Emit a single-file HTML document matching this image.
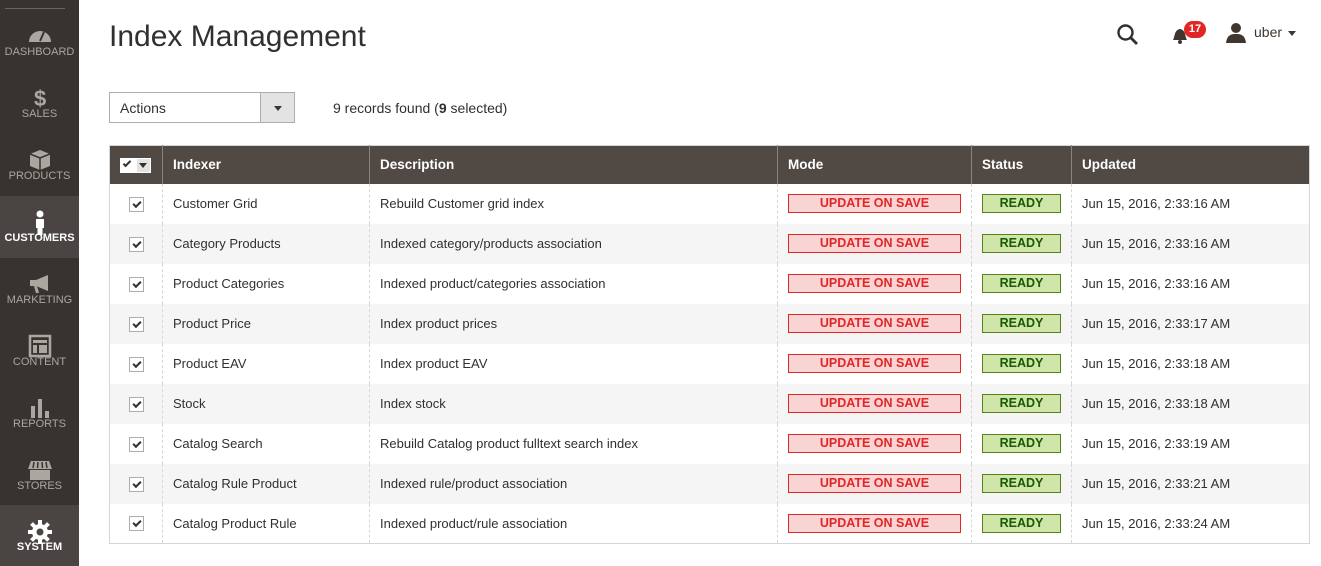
<!DOCTYPE html>
<html><head><meta charset="utf-8"><style>
*{box-sizing:border-box;margin:0;padding:0}
body{width:1321px;height:566px;overflow:hidden;background:#fff;font-family:"Liberation Sans",sans-serif;color:#303030;position:relative}
.side{position:absolute;left:0;top:0;width:79px;height:566px;background:#373330}
.side .line{position:absolute;left:5px;top:8px;width:60px;border-top:1px solid #6b6560}
.item{position:absolute;left:0;width:79px;height:62px;text-align:center;color:#aaa6a0;font-size:11px}
.item.act{background:#4a4542;color:#fff;font-weight:bold}
.item svg{position:absolute;left:27px;top:14px}
.item span{position:absolute;left:0;right:0;top:36px}
h1{position:absolute;left:109px;top:20px;font-size:30px;font-weight:normal;color:#303030}
.sel{position:absolute;left:109px;top:92px;width:186px;height:31px;border:1px solid #adadad}
.sel span{position:absolute;left:10px;top:7px;font-size:14px}
.sel .btn{position:absolute;right:0;top:0;width:34px;height:29px;background:#e3e3e3;border-left:1px solid #adadad}
.sel .btn:after{content:"";position:absolute;left:13px;top:13px;border:4px solid transparent;border-top:5px solid #41362f}
.rec{position:absolute;left:333px;top:100px;font-size:14px}
table{position:absolute;left:109px;top:145px;width:1201px;border-collapse:collapse;font-size:13px;border:1px solid #d6d6d6}
th{background:#514943;color:#fff;text-align:left;height:38px;padding-left:10px;font-size:13.5px;border-left:1px solid #8a837f}
th:first-child{border-left:none}
td{height:40px;padding-left:10px;border-left:1px dashed #d6d6d6}
td:first-child{border-left:none}
tr:nth-child(odd) td{background:#f5f5f5}
.cb{display:inline-block;width:15px;height:15px;border:1px solid #adadad;background:#fff;position:relative;margin-left:9px;vertical-align:middle}
.cb:after{content:"";position:absolute;left:3px;top:3px;width:6px;height:3px;border-left:2px solid #303030;border-bottom:2px solid #303030;transform:rotate(-45deg)}
.m{display:block;width:173px;height:19px;background:#f9d4d4;border:1px solid #e22626;color:#e22626;font-weight:bold;text-align:center;line-height:17px;font-size:12.5px}
.s{display:block;width:79px;height:19px;background:#d0e5a9;border:1px solid #5b8116;color:#185b00;font-weight:bold;text-align:center;line-height:17px;font-size:12.5px}
</style></head><body>
<div class="side"><div class="line"></div>
<div class="item" style="top:10px"><svg width="26" height="22" viewBox="0 0 26 22"><path d="M2 18A11 11 0 0 1 24 18Z" fill="#aaa6a0"/><path d="M13 17L17 8" stroke="#373330" stroke-width="2"/></svg><span style="top:36px">DASHBOARD</span></div>
<div class="item" style="top:72px"><svg width="26" height="24"><text x="7" y="20" font-size="22" font-weight="bold" fill="#aaa6a0" font-family="Liberation Sans">$</text></svg><span>SALES</span></div>
<div class="item" style="top:134px"><svg width="26" height="24" viewBox="0 0 26 24"><path d="M13 2L23 6V18L13 22L3 18V6Z" fill="#aaa6a0"/><path d="M3 6L13 10L23 6M13 10V22" stroke="#373330" stroke-width="1.5" fill="none"/></svg><span>PRODUCTS</span></div>
<div class="item act" style="top:196px"><svg width="26" height="26" viewBox="0 0 26 26"><circle cx="13" cy="4" r="3.5" fill="#fff"/><path d="M9 9H17V18H15.5V25H10.5V18H9Z" fill="#fff"/></svg><span>CUSTOMERS</span></div>
<div class="item" style="top:258px"><svg width="26" height="24" viewBox="0 0 26 24"><path d="M3 8H9L21 3V19L9 14H3Z M7 14L9 21H12L10 14Z" fill="#aaa6a0"/></svg><span>MARKETING</span></div>
<div class="item" style="top:320px"><svg width="26" height="24" viewBox="0 0 26 24"><path d="M3 2H23V22H3Z" fill="none" stroke="#aaa6a0" stroke-width="2.5"/><path d="M6 6H20V9H6ZM6 11H10V19H6ZM12 11H20V19H12Z" fill="#aaa6a0"/></svg><span>CONTENT</span></div>
<div class="item" style="top:382px"><svg width="26" height="24" viewBox="0 0 26 24"><path d="M4 10H8V22H4ZM11 3H15V22H11ZM18 15H22V22H18Z" fill="#aaa6a0"/></svg><span>REPORTS</span></div>
<div class="item" style="top:444px"><svg width="26" height="24" viewBox="0 0 26 24"><path d="M4 3H22L25 11H1Z M3 12H23V22H3Z" fill="#aaa6a0"/><path d="M7 4L6 10M11 4L10.5 10M15 4L15.5 10M19 4L20 10" stroke="#373330" stroke-width="1.5"/></svg><span>STORES</span></div>
<div class="item act" style="top:505px;height:61px"><svg width="26" height="26" viewBox="0 0 26 26"><circle cx="13" cy="13" r="8" fill="#fff"/><path d="M11 1H15V25H11ZM1 11H25V15H1Z" fill="#fff"/><path d="M11 1H15V25H11ZM1 11H25V15H1Z" fill="#fff" transform="rotate(45 13 13)"/><circle cx="13" cy="13" r="3.5" fill="#4a4542"/></svg><span>SYSTEM</span></div>
</div>
<h1>Index Management</h1>
<svg style="position:absolute;left:1116px;top:23px" width="24" height="24" viewBox="0 0 24 24"><circle cx="9.5" cy="9.5" r="7" fill="none" stroke="#303030" stroke-width="2.4"/><path d="M14.5 14.5L21 21" stroke="#303030" stroke-width="2.8"/></svg>
<svg style="position:absolute;left:1170px;top:24px" width="20" height="22" viewBox="0 0 20 22"><path d="M3 16C5 13 4 6 10 5C16 6 15 13 17 16Z" fill="#41362f"/><circle cx="10" cy="18" r="2" fill="#41362f"/></svg>
<div style="position:absolute;left:1184px;top:21px;width:22px;height:17px;border-radius:9px;background:#e22626;color:#fff;font-size:11px;font-weight:bold;text-align:center;line-height:17px">17</div>
<svg style="position:absolute;left:1225px;top:22px" width="22" height="22" viewBox="0 0 22 22"><circle cx="11" cy="6" r="5" fill="#41362f"/><path d="M1 21C2 13 6 12 11 12C16 12 20 13 21 21Z" fill="#41362f"/></svg>
<div style="position:absolute;left:1254px;top:24px;font-size:14px;color:#41362f">uber</div>
<div style="position:absolute;left:1288px;top:31px;border:4px solid transparent;border-top:5px solid #41362f"></div>
<div class="sel"><span>Actions</span><div class="btn"></div></div>
<div class="rec">9 records found (<b>9</b> selected)</div>
<table>
<tr><th style="width:53px;padding-left:10px"><span style="display:inline-block;width:31px;height:15px;background:#fff;vertical-align:middle;position:relative"><span style="position:absolute;left:3px;top:3px;width:8px;height:4px;border-left:2px solid #303030;border-bottom:2px solid #303030;transform:rotate(-45deg)"></span><span style="position:absolute;left:16px;top:0;width:15px;height:15px;background:#e3e3e3;border:1px solid #fff"></span><span style="position:absolute;left:19px;top:5px;border:4px solid transparent;border-top:5px solid #303030"></span></span></th><th style="width:207px">Indexer</th><th style="width:408px">Description</th><th style="width:194px">Mode</th><th style="width:100px">Status</th><th>Updated</th></tr>
<tr><td><span class="cb"></span></td><td>Customer Grid</td><td>Rebuild Customer grid index</td><td><span class="m">UPDATE ON SAVE</span></td><td><span class="s">READY</span></td><td>Jun 15, 2016, 2:33:16 AM</td></tr>
<tr><td><span class="cb"></span></td><td>Category Products</td><td>Indexed category/products association</td><td><span class="m">UPDATE ON SAVE</span></td><td><span class="s">READY</span></td><td>Jun 15, 2016, 2:33:16 AM</td></tr>
<tr><td><span class="cb"></span></td><td>Product Categories</td><td>Indexed product/categories association</td><td><span class="m">UPDATE ON SAVE</span></td><td><span class="s">READY</span></td><td>Jun 15, 2016, 2:33:16 AM</td></tr>
<tr><td><span class="cb"></span></td><td>Product Price</td><td>Index product prices</td><td><span class="m">UPDATE ON SAVE</span></td><td><span class="s">READY</span></td><td>Jun 15, 2016, 2:33:17 AM</td></tr>
<tr><td><span class="cb"></span></td><td>Product EAV</td><td>Index product EAV</td><td><span class="m">UPDATE ON SAVE</span></td><td><span class="s">READY</span></td><td>Jun 15, 2016, 2:33:18 AM</td></tr>
<tr><td><span class="cb"></span></td><td>Stock</td><td>Index stock</td><td><span class="m">UPDATE ON SAVE</span></td><td><span class="s">READY</span></td><td>Jun 15, 2016, 2:33:18 AM</td></tr>
<tr><td><span class="cb"></span></td><td>Catalog Search</td><td>Rebuild Catalog product fulltext search index</td><td><span class="m">UPDATE ON SAVE</span></td><td><span class="s">READY</span></td><td>Jun 15, 2016, 2:33:19 AM</td></tr>
<tr><td><span class="cb"></span></td><td>Catalog Rule Product</td><td>Indexed rule/product association</td><td><span class="m">UPDATE ON SAVE</span></td><td><span class="s">READY</span></td><td>Jun 15, 2016, 2:33:21 AM</td></tr>
<tr><td><span class="cb"></span></td><td>Catalog Product Rule</td><td>Indexed product/rule association</td><td><span class="m">UPDATE ON SAVE</span></td><td><span class="s">READY</span></td><td>Jun 15, 2016, 2:33:24 AM</td></tr>
</table>
</body></html>
